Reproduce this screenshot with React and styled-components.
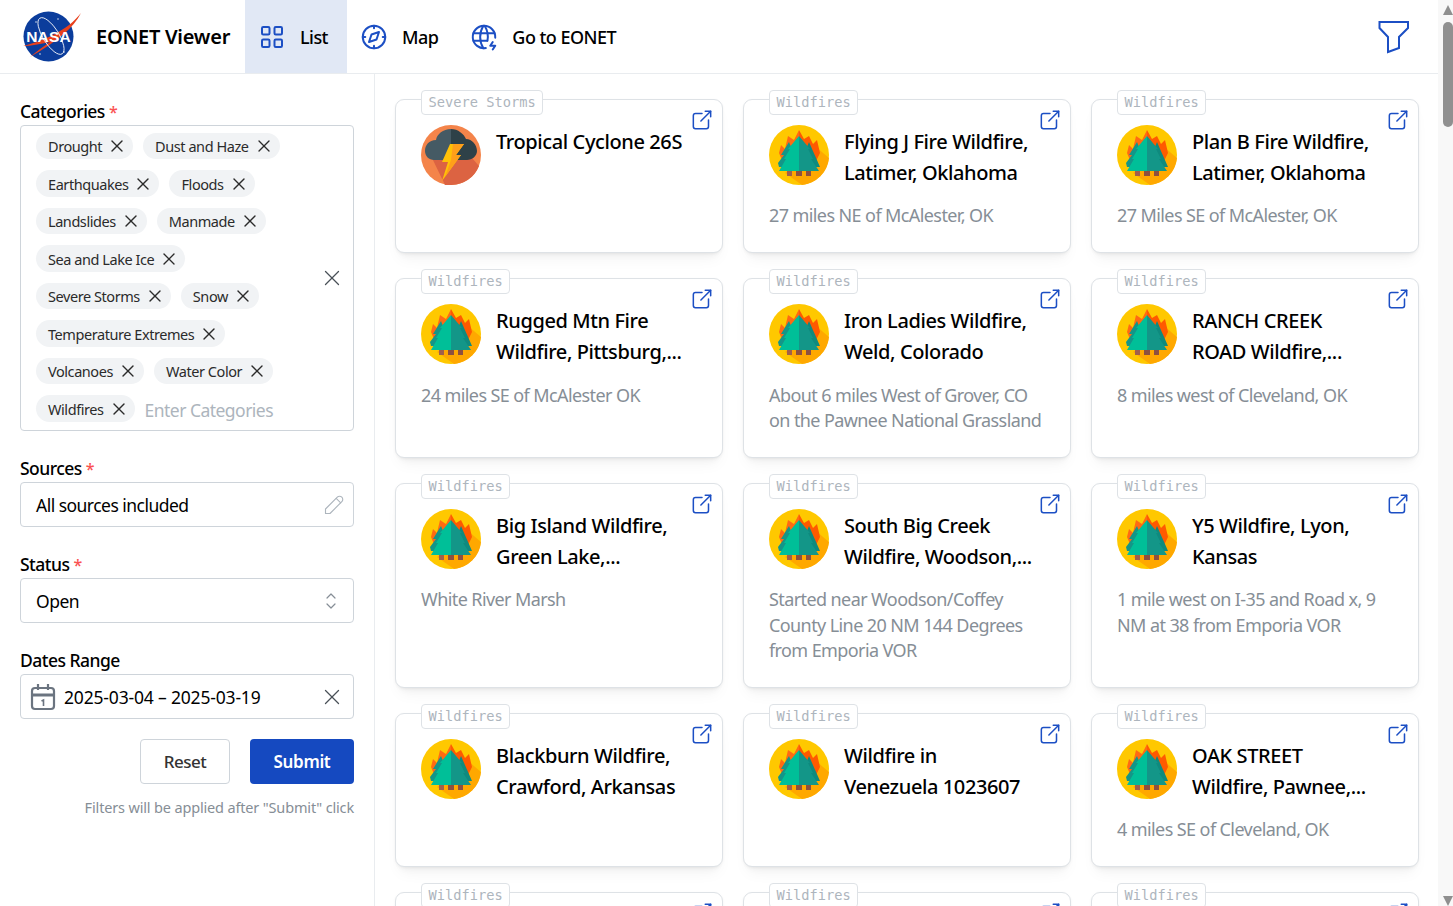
import React from 'react';
import styled, { createGlobalStyle } from 'styled-components';
import { TbLayoutGrid, TbCompass, TbWorldBolt, TbExternalLink, TbX, TbPencil, TbSelector } from 'react-icons/tb';

const categories = [
    'Drought', 'Dust and Haze', 'Earthquakes', 'Floods', 'Landslides', 'Manmade', 'Sea and Lake Ice',
    'Severe Storms', 'Snow', 'Temperature Extremes', 'Volcanoes', 'Water Color', 'Wildfires',
];

const events = [
    { tag: 'Severe Storms', title: 'Tropical Cyclone 26S', kind: 'storm' },
    { tag: 'Wildfires', title: 'Flying J Fire Wildfire,\nLatimer, Oklahoma', desc: '27 miles NE of McAlester, OK' },
    { tag: 'Wildfires', title: 'Plan B Fire Wildfire,\nLatimer, Oklahoma', desc: '27 Miles SE of McAlester, OK' },
    { tag: 'Wildfires', title: 'Rugged Mtn Fire\nWildfire, Pittsburg,...', desc: '24 miles SE of McAlester OK' },
    { tag: 'Wildfires', title: 'Iron Ladies Wildfire,\nWeld, Colorado', desc: 'About 6 miles West of Grover, CO on the Pawnee National Grassland' },
    { tag: 'Wildfires', title: 'RANCH CREEK\nROAD Wildfire,...', desc: '8 miles west of Cleveland, OK' },
    { tag: 'Wildfires', title: 'Big Island Wildfire,\nGreen Lake,...', desc: 'White River Marsh' },
    { tag: 'Wildfires', title: 'South Big Creek\nWildfire, Woodson,...', desc: 'Started near Woodson/Coffey County Line 20 NM 144 Degrees from Emporia VOR' },
    { tag: 'Wildfires', title: 'Y5 Wildfire, Lyon,\nKansas', desc: '1 mile west on I-35 and Road x, 9 NM at 38 from Emporia VOR' },
    { tag: 'Wildfires', title: 'Blackburn Wildfire,\nCrawford, Arkansas' },
    { tag: 'Wildfires', title: 'Wildfire in\nVenezuela 1023607' },
    { tag: 'Wildfires', title: 'OAK STREET\nWildfire, Pawnee,...', desc: '4 miles SE of Cleveland, OK' },
    { tag: 'Wildfires', title: '' },
    { tag: 'Wildfires', title: '' },
    { tag: 'Wildfires', title: '' },
];

function NasaLogo() {
    return (
        <svg width="64" height="54" viewBox="0 0 64 54">
            <circle cx="28.5" cy="26.5" r="25" fill="#0b3d9c" />
            <circle cx="16" cy="12" r="0.7" fill="#fff" />
            <circle cx="38" cy="9" r="0.7" fill="#fff" />
            <circle cx="44" cy="42" r="0.7" fill="#fff" />
            <circle cx="20" cy="44" r="0.7" fill="#fff" />
            <path d="M3 36 C24 31 48 20 61 3 C54 18 36 32 10 47 C17 41 24 36 30 32 C20 34 11 36 3 36Z" fill="#e8401c" />
            <ellipse cx="31" cy="26" rx="21" ry="8" fill="none" stroke="#fff" strokeWidth="0.8" transform="rotate(58 31 26)" />
            <text x="28.5" y="32" textAnchor="middle" fill="#fff" fontFamily="Liberation Sans" fontWeight="700" fontSize="15.5" letterSpacing="0.2">NASA</text>
        </svg>
    );
}

function FireIcon() {
    return (
        <svg width="60" height="60" viewBox="0 0 60 60">
            <circle cx="30" cy="30" r="30" fill="#ffc800" />
            <path d="M47 22 L60 33 A30 30 0 0 1 33 60 L16 48Z" fill="#ffa800" />
            <path d="M30 5 L25 15 L19 11 L16 24 L12 20 L10 28 L15 40 L30 40Z" fill="#ff6a13" />
            <path d="M30 5 L35 14 L40 11 L44 19 L48 15 L51 28 L45 40 L30 40Z" fill="#ff5a00" />
            <path d="M20 17 L30 42 L10 42 L9 38 L15 30 L12 30Z" fill="#139688" />
            <path d="M40 17 L51 42 L30 42Z" fill="#0f8a7e" />
            <path d="M30 11 L30 46 L10 46 L17 34 L15 34 L21 24 L19 24Z" fill="#00bf98" />
            <path d="M30 11 L41 24 L39 24 L44 34 L42 34 L50 46 L30 46Z" fill="#139688" />
            <rect x="18" y="46" width="5" height="5" fill="#a0604c" />
            <rect x="27" y="46" width="6" height="5" fill="#8d5040" />
            <rect x="37" y="46" width="5" height="5" fill="#8d5040" />
        </svg>
    );
}

function StormIcon() {
    return (
        <svg width="60" height="60" viewBox="0 0 60 60">
            <circle cx="30" cy="30" r="30" fill="#f4844a" />
            <path d="M11 33 L51 33 L58 41 A30 30 0 0 1 30 60 L24 60Z" fill="#dc6342" />
            <path d="M30 4 C22 4 16 9 15 15 C8 15 4 20 4 26 C4 31 8 35 13 35 L30 35Z" fill="#455a64" />
            <path d="M30 4 C37 4 43 9 45 14 C51 14 56 20 56 26 C56 31 51 35 46 35 L30 35Z" fill="#2e4148" />
            <path d="M29 19 L43 19 L35 30 L40 30 L21 56 L27 37 L21 37Z" fill="#ffc107" />
            <path d="M32 19 L43 19 L35 30 L40 30 L24 52 L30 35Z" fill="#ff9f1a" />
        </svg>
    );
}

function CalendarIcon() {
    return (
        <svg width="26" height="28" viewBox="0 0 26 28" fill="none" stroke="#6b7480" strokeWidth="2.2">
            <rect x="2" y="5" width="22" height="21" rx="3" />
            <path d="M2 12 H24" strokeWidth="3" />
            <path d="M8 1 V7 M18 1 V7" />
            <path d="M11.5 18 L13.5 17 V23" strokeWidth="1.6" />
        </svg>
    );
}

export default function App() {
    return (
        <Shell>
            <GlobalStyle />
            <Page>
                <Header>
                    <Brand>
                        <NasaLogo />
                        <BrandName>EONET Viewer</BrandName>
                    </Brand>
                    <NavItem $active><TbLayoutGrid size={30} strokeWidth={1.6} /><span>List</span></NavItem>
                    <NavItem><TbCompass size={30} strokeWidth={1.6} /><span>Map</span></NavItem>
                    <NavItem><TbWorldBolt size={30} strokeWidth={1.6} /><span>Go to EONET</span></NavItem>
                    <FilterButton>
                        <svg width="32" height="34" viewBox="0 0 32 34" fill="none" stroke="#1c4fc4" strokeWidth="2">
                            <path d="M1.5 2 H30 V8 L21 17 V28 L10 32 V17 L1.5 8Z" />
                        </svg>
                    </FilterButton>
                </Header>
                <Body>
                    <Sidebar>
                        <Field>
                            <Label>Categories <Req>*</Req></Label>
                            <TagsBox>
                                <Pills>
                                    {categories.map((c) => (
                                        <Pill key={c}>{c}<TbX size={20} strokeWidth={1.6} /></Pill>
                                    ))}
                                    <Placeholder>Enter Categories</Placeholder>
                                </Pills>
                                <BoxIcon><TbX size={26} strokeWidth={1.2} /></BoxIcon>
                            </TagsBox>
                        </Field>
                        <Field>
                            <Label>Sources <Req>*</Req></Label>
                            <Input $right={5}>All sources included<Muted><TbPencil size={27} strokeWidth={1} /></Muted></Input>
                        </Field>
                        <Field>
                            <Label>Status <Req>*</Req></Label>
                            <Input $right={10}>Open<Selector><TbSelector size={24} strokeWidth={1.2} /></Selector></Input>
                        </Field>
                        <Field>
                            <Label>Dates Range</Label>
                            <DateInput $right={10}>
                                <CalendarIcon />
                                <DateText>2025-03-04 – 2025-03-19</DateText>
                                <BoxIcon><TbX size={26} strokeWidth={1.2} /></BoxIcon>
                            </DateInput>
                        </Field>
                        <Actions>
                            <ResetButton>Reset</ResetButton>
                            <SubmitButton>Submit</SubmitButton>
                        </Actions>
                        <Hint>Filters will be applied after "Submit" click</Hint>
                    </Sidebar>
                    <Grid>
                        {events.map((e, i) => (
                            <Card key={i}>
                                <Tag>{e.tag}</Tag>
                                <LinkIcon><TbExternalLink size={26} strokeWidth={1.4} /></LinkIcon>
                                <CardHead>
                                    <IconSlot>{e.kind === 'storm' ? <StormIcon /> : <FireIcon />}</IconSlot>
                                    <Title>{e.title}</Title>
                                </CardHead>
                                {e.desc && <Desc>{e.desc}</Desc>}
                            </Card>
                        ))}
                    </Grid>
                </Body>
            </Page>
            <ScrollTrack>
                <ArrowUp />
                <ScrollThumb />
                <ArrowDown />
            </ScrollTrack>
        </Shell>
    );
}

const GlobalStyle = createGlobalStyle`
    html, body {
        margin: 0;
        height: 100%;
        overflow: hidden;
    }
    body {
        font-family: "Noto Sans", "Open Sans", sans-serif;
        color: #000;
        background: #fff;
    }
    * {
        box-sizing: border-box;
    }
`;

const Shell = styled.div`
    display: flex;
    height: 100vh;
`;

const Page = styled.div`
    flex: 1;
    min-width: 0;
    overflow: hidden;
`;

const ScrollTrack = styled.div`
    flex: none;
    width: 15px;
    display: flex;
    flex-direction: column;
    background: #f8f8f8;
    padding: 5px 0 0 5px;
`;

const ArrowUp = styled.div`
    width: 0;
    height: 0;
    border-left: 5px solid transparent;
    border-right: 5px solid transparent;
    border-bottom: 10px solid #8f8f8f;
`;

const ArrowDown = styled.div`
    width: 0;
    height: 0;
    margin-top: auto;
    border-left: 5px solid transparent;
    border-right: 5px solid transparent;
    border-top: 10px solid #8f8f8f;
`;

const ScrollThumb = styled.div`
    width: 10px;
    height: 105px;
    margin-top: 7px;
    border-radius: 5px;
    background: #909090;
`;

const Header = styled.header`
    display: flex;
    align-items: stretch;
    height: 74px;
    border-bottom: 1px solid #e9ecef;
    padding-left: 20px;
`;

const Brand = styled.div`
    display: flex;
    align-items: center;
    width: 225px;
    gap: 12px;
`;

const BrandName = styled.div`
    font-size: 20px;
    font-weight: 600;
    letter-spacing: -0.0125em;
    white-space: nowrap;
`;

const NavItem = styled.div`
    display: flex;
    align-items: center;
    gap: 13px;
    padding: 0 19px 0 12px;
    font-size: 18px;
    font-weight: 500;
    letter-spacing: -0.03em;
    background: ${(p) => (p.$active ? '#e1e8f5' : 'transparent')};
    svg {
        color: #1c4fc4;
    }
`;

const FilterButton = styled.div`
    margin-left: auto;
    margin-right: 28px;
    display: flex;
    align-items: center;
`;

const Body = styled.div`
    display: flex;
`;

const Sidebar = styled.aside`
    flex: none;
    width: 375px;
    padding: 24px 20px;
    border-right: 1px solid #e9ecef;
`;

const Field = styled.div`
    margin-bottom: 24px;
`;

const Label = styled.div`
    height: 27px;
    font-size: 17.5px;
    line-height: 27px;
    font-weight: 500;
    letter-spacing: -0.03em;
`;

const Req = styled.span`
    color: #fa5252;
    font-size: 16px;
    line-height: 1;
`;

const TagsBox = styled.div`
    display: flex;
    align-items: center;
    height: 306px;
    border: 1px solid #ced4da;
    border-radius: 4px;
    padding: 6.5px 10px 6.5px 15px;
`;

const Pills = styled.div`
    flex: 1;
    display: flex;
    flex-wrap: wrap;
    align-content: flex-start;
    gap: 11px 10px;
`;

const Pill = styled.div`
    display: flex;
    align-items: center;
    gap: 5px;
    height: 26.5px;
    padding: 0 6px 0 12px;
    border-radius: 14px;
    background: #f1f3f5;
    font-size: 14.5px;
    letter-spacing: -0.03em;
    color: #2b2b2b;
`;

const Placeholder = styled.div`
    margin-top: 1.5px;
    font-size: 17.5px;
    letter-spacing: -0.03em;
    color: #adb5bd;
    line-height: 26.5px;
`;

const BoxIcon = styled.div`
    display: flex;
    color: #495057;
    margin-right: -1.5px;
`;

const Input = styled.div`
    display: flex;
    align-items: center;
    justify-content: space-between;
    height: 45px;
    border: 1px solid #ced4da;
    border-radius: 4px;
    padding: 0 ${(p) => p.$right}px 0 15px;
    font-size: 17.5px;
    letter-spacing: -0.03em;
`;

const Muted = styled.span`
    display: flex;
    color: #adb5bd;
`;

const Selector = styled(Muted)`
    color: #868e96;
`;

const DateInput = styled(Input)`
    padding-left: 9px;
    justify-content: flex-start;
    gap: 8px;
`;

const DateText = styled.span`
    flex: 1;
    letter-spacing: -0.01em;
`;

const Actions = styled.div`
    display: flex;
    justify-content: flex-end;
    gap: 20px;
    margin-top: -4px;
`;

const ResetButton = styled.div`
    display: flex;
    align-items: center;
    justify-content: center;
    width: 90px;
    height: 45px;
    border: 1px solid #ced4da;
    border-radius: 4px;
    font-size: 17px;
    font-weight: 500;
    letter-spacing: -0.03em;
    color: #333;
`;

const SubmitButton = styled(ResetButton)`
    width: 104px;
    border: none;
    background: #1549c0;
    color: #fff;
    font-weight: 600;
    letter-spacing: -0.02em;
`;

const Hint = styled.div`
    margin-top: 13px;
    text-align: right;
    font-size: 14.5px;
    letter-spacing: -0.011em;
    color: #868e96;
`;

const Grid = styled.main`
    flex: 1;
    display: grid;
    grid-template-columns: repeat(3, 328px);
    grid-auto-rows: min-content;
    gap: 25px 20px;
    padding: 24.75px 0 0 20px;
`;

const Card = styled.article`
    position: relative;
    border: 1px solid #dee2e6;
    border-radius: 9px;
    padding: 25px 25px 23px;
    min-height: 154.5px;
    background: #fff;
    box-shadow: 0 1px 3px rgba(0, 0, 0, 0.05), 0 10px 15px -5px rgba(0, 0, 0, 0.05), 0 7px 7px -5px rgba(0, 0, 0, 0.04);
`;

const Tag = styled.div`
    position: absolute;
    top: -10px;
    left: 25px;
    height: 25px;
    padding: 0 6.5px;
    line-height: 23px;
    border: 1px solid #dee2e6;
    border-radius: 4px;
    background: #fff;
    color: #adb5bd;
    font-family: "DejaVu Sans Mono", monospace;
    font-size: 13.7px;
`;

const LinkIcon = styled.div`
    position: absolute;
    top: 7px;
    right: 7px;
    display: flex;
    color: #1c4fc4;
`;

const CardHead = styled.div`
    display: flex;
    gap: 15px;
`;

const IconSlot = styled.div`
    flex: none;
    width: 60px;
    height: 60px;
`;

const Title = styled.h3`
    margin: 1px 0 0;
    font-size: 20px;
    line-height: 31px;
    font-weight: 500;
    letter-spacing: -0.02em;
    min-height: 62px;
    white-space: pre-line;
`;

const Desc = styled.p`
    margin: 15.5px 0 0;
    font-size: 18px;
    line-height: 25.5px;
    letter-spacing: -0.033em;
    color: #868e96;
`;
